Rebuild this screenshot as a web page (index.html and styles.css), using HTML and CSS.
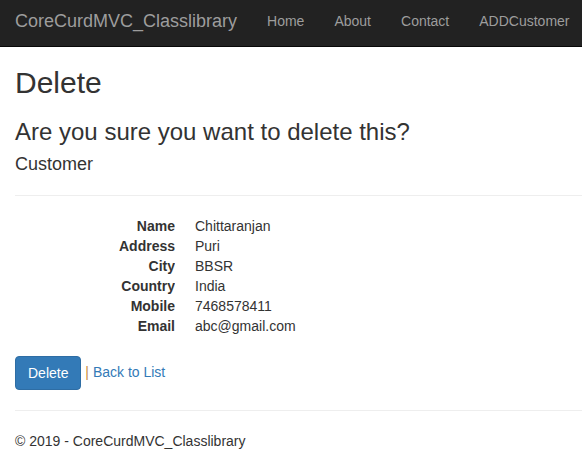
FILE: index.html
```html
<!DOCTYPE html>
<html>
<head>
	<title>Delete - CoreCurdMVC_Classlibrary</title>
	<link rel="stylesheet" href="styles.css">
</head>
<body>
	<nav class="navbar">
		<a class="navbar-brand" href="#">CoreCurdMVC_Classlibrary</a>
		<ul class="nav">
			<li><a href="#">Home</a></li>
			<li><a href="#">About</a></li>
			<li><a href="#">Contact</a></li>
			<li><a href="#">ADDCustomer</a></li>
		</ul>
	</nav>

	<div class="container body-content">
		<h2>Delete</h2>
		<h3>Are you sure you want to delete this?</h3>
		<div>
			<h4>Customer</h4>
			<hr>
			<dl class="dl-horizontal">
				<dt>Name</dt><dd>Chittaranjan</dd>
				<dt>Address</dt><dd>Puri</dd>
				<dt>City</dt><dd>BBSR</dd>
				<dt>Country</dt><dd>India</dd>
				<dt>Mobile</dt><dd>7468578411</dd>
				<dt>Email</dt><dd>abc@gmail.com</dd>
			</dl>

			<form action="#" method="post">
				<input type="submit" value="Delete" class="btn btn-primary"> <span class="sep">|</span>
				<a href="#">Back to List</a>
			</form>
		</div>
		<hr>
		<footer>
			<p>&copy; 2019 - CoreCurdMVC_Classlibrary</p>
		</footer>
	</div>
</body>
</html>
```

FILE: styles.css
```css
* { box-sizing: border-box; }
body { margin: 0; font-family: "Liberation Sans", Arial, sans-serif; font-size: 14px; line-height: 1.42857143; color: #333; background: #fff; }
a { color: #337ab7; text-decoration: none; }

/* top bar */
.navbar { display: flex; height: 47px; background: #222; border-bottom: 1px solid #080808; white-space: nowrap; overflow: hidden; }
.navbar-brand { padding: 11px 15px 15px 15px; font-size: 18px; line-height: 20px; color: #9d9d9d; }
.nav { display: flex; list-style: none; margin: 0; padding: 0; }
.nav li a { display: block; padding: 11px 15px 15px 15px; line-height: 20px; color: #9d9d9d; }

.container { padding-left: 15px; overflow: hidden; }
h2, h3, h4 { font-family: inherit; font-weight: 500; line-height: 1.1; color: inherit; }
h2 { font-size: 30px; margin: 19px 0 10px 0; }
h3 { font-size: 24px; margin: 20px 0 10px 0; }
h4 { font-size: 18px; margin: 10px 0 10px 0; }
hr { margin: 20px 0; border: 0; border-top: 1px solid #eee; }

.dl-horizontal { margin: 0 0 20px 0; }
.dl-horizontal dt { float: left; clear: left; width: 160px; text-align: right; font-weight: bold; line-height: 1.42857143; overflow: hidden; white-space: nowrap; }
.dl-horizontal dd { margin-left: 180px; line-height: 1.42857143; }

.btn { display: inline-block; padding: 6px 12px; font-family: inherit; font-size: 14px; line-height: 1.42857143; border: 1px solid transparent; border-radius: 4px; cursor: pointer; vertical-align: middle; }
.btn-primary { color: #fff; background-color: #337ab7; border-color: #2e6da4; }
.sep { color: #c98a3a; }

footer p { margin: 0 0 10px 0; }
```
